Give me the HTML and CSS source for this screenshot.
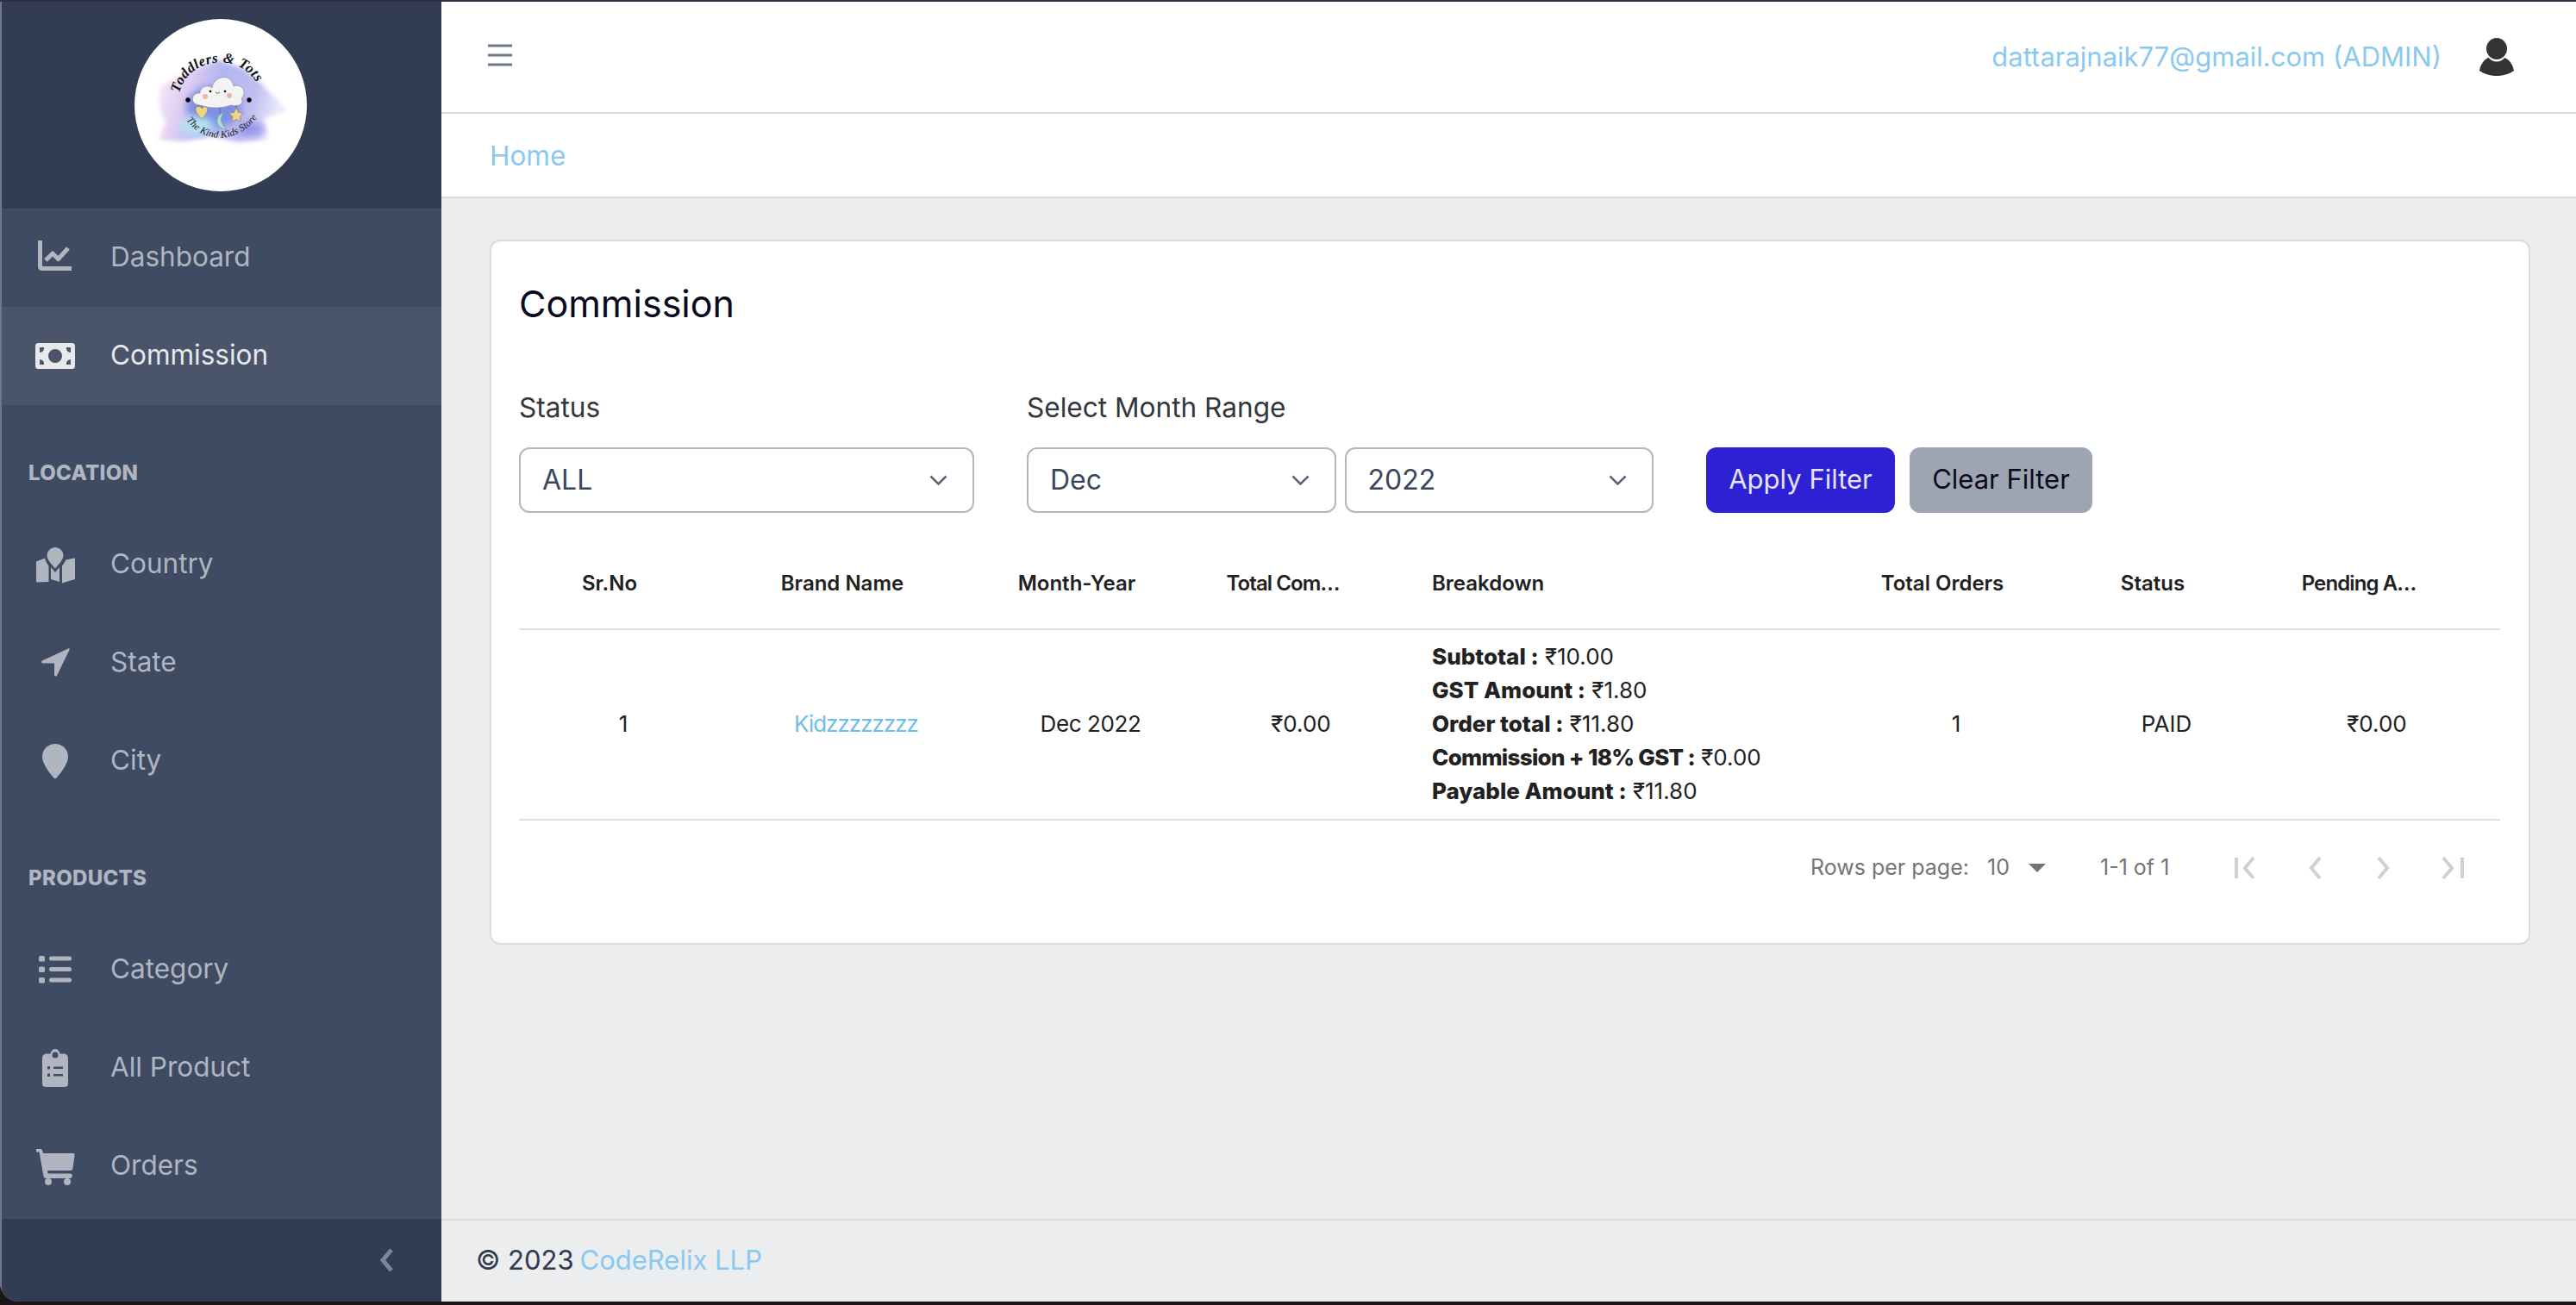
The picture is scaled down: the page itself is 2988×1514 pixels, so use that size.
FILE: index.html
```html
<!DOCTYPE html>
<html lang="en">
<head>
<meta charset="utf-8">
<title>Commission</title>
<link rel="stylesheet" href="styles.css">
</head>
<body>
<div class="app">
  <aside class="sidebar">
    <div class="brand">
      <svg class="logo" viewBox="0 0 200 200" aria-label="Toddlers &amp; Tots logo">
        <defs>
          <filter id="soft" x="-30%" y="-30%" width="160%" height="160%"><feGaussianBlur stdDeviation="4"/></filter>
          <filter id="softer" x="-20%" y="-20%" width="140%" height="140%"><feGaussianBlur stdDeviation="2.500"/></filter>
          <linearGradient id="wash" x1="0" y1="0" x2="1" y2="0.2">
            <stop offset="0" stop-color="#f8ebf8"/>
            <stop offset="0.28" stop-color="#dcc8f0"/>
            <stop offset="0.5" stop-color="#a9aef0"/>
            <stop offset="0.8" stop-color="#b9b6f0"/>
            <stop offset="1" stop-color="#e6e4f9"/>
          </linearGradient>
          <path id="arcTop" d="M52 86 C62 42 130 36 146 84 L160 120"/>
          <path id="arcBottom" d="M60 117 C80 145 118 145 141 116 L165 90"/>
        </defs>
        <circle cx="100" cy="100" r="100" fill="#fff"/>
        <path d="M30 78 L62 62 L96 47 L128 58 L148 76 L177 106 L150 116 L155 140 L120 143 L90 136 L56 142 L28 140 L36 120 L28 100Z" fill="url(#wash)" filter="url(#softer)" opacity=".9"/>
        <ellipse cx="92" cy="102" rx="32" ry="24" fill="#7f8fe4" filter="url(#soft)"/>
        <ellipse cx="72" cy="124" rx="20" ry="11" fill="#b5e0f2" filter="url(#soft)"/>
        <ellipse cx="135" cy="128" rx="16" ry="9" fill="#9a99ea" filter="url(#soft)"/>
        <path d="M76 100 C64 100 65 85 76 86 C76 78 86 76 90 80 C92 66 112 62 115 78 C125 74 131 86 124 92 C128 100 118 102 112 100 C100 104 88 104 76 100Z" fill="#f3f3f3" stroke="#8f8f96" stroke-width=".6"/>
        <circle cx="88" cy="84" r="1.300" fill="#111"/><circle cx="105" cy="84" r="1.300" fill="#111"/>
        <path d="M94 85 q2.500 2.500 5 0" fill="none" stroke="#222" stroke-width=".7"/>
        <circle cx="82" cy="90" r="3" fill="#eab7ae"/><circle cx="110" cy="89" r="3" fill="#eab7ae"/>
        <circle cx="62" cy="94" r="2.700" fill="#000"/><circle cx="133" cy="94" r="2.700" fill="#000"/>
        <path d="M78 101v2M99 103v8M118 100v4" stroke="#555" stroke-width=".6"/>
        <path d="M78 116 C68 106 70 101 75 101.500 C77 102 78 103 78 104 C79 102 81 101.500 83 102 C87 104 84 110 78 116Z" fill="#eed585" stroke="#6d6a5c" stroke-width=".5"/>
        <path d="M104 109 C94 109 91 127 107 128 C100 122 98 114 104 109Z" fill="#a8dfd2" stroke="#6b8f8b" stroke-width=".5"/>
        <path d="M118 103l2.500 5.500 6 .7-4.500 4 1.300 6-5.300-3-5.300 3 1.300-6-4.500-4 6-.7z" fill="#eed585" stroke="#77745f" stroke-width=".5"/>
        <text class="logo-title"><textPath href="#arcTop">Toddlers &amp; Tots</textPath></text>
        <text class="logo-sub"><textPath href="#arcBottom">The Kind Kids Store</textPath></text>
      </svg>
    </div>
    <nav class="nav">
      <a class="nav-item">
        <svg class="ico" viewBox="0 0 46 46"><path d="M5.500 3v30.500a2 2 0 0 0 2 2H42" class="line"/><path d="M12 26l8-8 6.500 6.500L38 12" class="line"/></svg>
        <span>Dashboard</span>
      </a>
      <a class="nav-item active">
        <svg class="ico" viewBox="0 0 46 46"><path fill-rule="evenodd" d="M3.500 8h39A3.500 3.500 0 0 1 46 11.500v23a3.500 3.500 0 0 1-3.500 3.500h-39A3.500 3.500 0 0 1 0 34.500v-23A3.500 3.500 0 0 1 3.500 8zM23 15a8 8 0 1 0 0 16 8 8 0 0 0 0-16zM5 13v6a5 5 0 0 0 5-6zM36 13a5 5 0 0 0 5 6v-6zM5 27v6h5a5 5 0 0 0-5-6zM41 27a5 5 0 0 0-5 6h5z"/></svg>
        <span>Commission</span>
      </a>
      <div class="nav-title first">Location</div>
      <a class="nav-item">
        <svg class="ico" viewBox="0 0 46 46"><path d="M23 3a9.500 9.500 0 0 0-9.500 9.500c0 4.500 6 11 9.500 15 3.500-4 9.500-10.500 9.500-15A9.500 9.500 0 0 0 23 3z"/><path d="M1 19.500l10-4c.5 3 3 7 4.500 9V43L2.500 43.500A1.500 1.500 0 0 1 1 42zM18 26l5 6 5-6v17l-10-3zM45 15.500a1 1 0 0 1 1 1V40l-15 4.500V24.500c2-2.500 3.500-5 4.500-7z"/></svg>
        <span>Country</span>
      </a>
      <a class="nav-item">
        <svg class="ico" viewBox="0 0 46 46"><path d="M38 6.500 8 20.500c-1.500.8-1 3 .7 3H22v13.500c0 1.700 2.300 2.200 3 .7L39.500 8c.5-1.200-.4-2-1.500-1.500z"/></svg>
        <span>State</span>
      </a>
      <a class="nav-item">
        <svg class="ico" viewBox="0 0 46 46"><path d="M23 3C14.500 3 8 9.500 8 18c0 8 9 19.500 13.500 24.500a2 2 0 0 0 3 0C29 37.500 38 26 38 18 38 9.500 31.500 3 23 3z"/></svg>
        <span>City</span>
      </a>
      <div class="nav-title">Products</div>
      <a class="nav-item">
        <svg class="ico" viewBox="0 0 46 46"><rect x="4" y="7" width="7" height="6.500" rx="1.500"/><rect x="4" y="19.500" width="7" height="6.500" rx="1.500"/><rect x="4" y="32" width="7" height="6.500" rx="1.500"/><rect x="16" y="7.500" width="26" height="5" rx="2.500"/><rect x="16" y="20" width="26" height="5" rx="2.500"/><rect x="16" y="32.500" width="26" height="5" rx="2.500"/></svg>
        <span>Category</span>
      </a>
      <a class="nav-item">
        <svg class="ico" viewBox="0 0 46 46"><path fill-rule="evenodd" d="M13 6.500h4.500C18 3.500 20 1 23 1s5 2.500 5.500 5.500H33a5 5 0 0 1 5 5V41a4 4 0 0 1-4 4H12a4 4 0 0 1-4-4V11.500a5 5 0 0 1 5-5zM23 4.500a2.500 2.500 0 0 0 0 7 2.500 2.500 0 0 0 0-7zM14 21v3.500h3V21zM21 21.500v2.500h11v-2.500zM14 29.500V33h3v-3.500zM21 30v2.500h11V30z"/></svg>
        <span>All Product</span>
      </a>
      <a class="nav-item">
        <svg class="ico" viewBox="0 0 46 46"><path d="M1 3h5a2 2 0 0 1 2 1.500L9 8h34.500c1.500 0 2.500 1 2 2.500l-2 15c-.2 1.500-1.300 2.500-3 2.500H14l.7 3.500H40a1.500 1.500 0 0 1 0 5.500H12a2.500 2.500 0 0 1-2.400-2L4.500 6.500H1z"/><circle cx="15" cy="41" r="4"/><circle cx="37" cy="41" r="4"/></svg>
        <span>Orders</span>
      </a>
    </nav>
    <div class="sidebar-foot">
      <svg class="collapse" viewBox="0 0 18 28"><path d="M14 2 4 14l10 12"/></svg>
    </div>
  </aside>
  <div class="main">
    <header class="topbar">
      <svg class="burger" viewBox="0 0 28 26"><path d="M0 2h28M0 13h28M0 24h28"/></svg>
      <div class="account">
        <a class="email">dattarajnaik77@gmail.com (ADMIN)</a>
        <svg class="user" viewBox="0 0 42 44"><ellipse cx="21" cy="12.500" rx="12" ry="12.500"/><path d="M11.500 23c3 3 6 4.500 9.500 4.500s6.500-1.500 9.500-4.500c5 2 9.500 8 10.500 15-5 3.500-12 6-20 6s-15-2.500-20-6c1-7 5.500-13 10-15z"/></svg>
      </div>
    </header>
    <div class="crumbs"><a>Home</a></div>
    <main class="content">
      <section class="card">
        <h1 class="title">Commission</h1>
        <div class="filters">
          <div class="field status-field">
            <div class="label">Status</div>
            <div class="select"><span>ALL</span><svg class="chev" viewBox="0 0 21 12"><path d="M1.500 1.500 10.500 10.500 19.500 1.500"/></svg></div>
          </div>
          <div class="field month-field">
            <div class="label">Select Month Range</div>
            <div class="pair">
              <div class="select"><span>Dec</span><svg class="chev" viewBox="0 0 21 12"><path d="M1.500 1.500 10.500 10.500 19.500 1.500"/></svg></div>
              <div class="select"><span>2022</span><svg class="chev" viewBox="0 0 21 12"><path d="M1.500 1.500 10.500 10.500 19.500 1.500"/></svg></div>
            </div>
          </div>
          <div class="actions">
            <button class="btn apply">Apply Filter</button>
            <button class="btn clear">Clear Filter</button>
          </div>
        </div>
        <div class="table">
          <div class="row head">
            <div class="cell">Sr.No</div>
            <div class="cell">Brand Name</div>
            <div class="cell">Month-Year</div>
            <div class="cell clip">Total Com…</div>
            <div class="cell left">Breakdown</div>
            <div class="cell">Total Orders</div>
            <div class="cell">Status</div>
            <div class="cell clip">Pending A…</div>
          </div>
          <div class="row body">
            <div class="cell">1</div>
            <div class="cell"><a class="link">Kidzzzzzzzz</a></div>
            <div class="cell month-cell">Dec 2022</div>
            <div class="cell">₹0.00</div>
            <div class="cell left breakdown">
              <div><b>Subtotal :</b> ₹10.00</div>
              <div><b>GST Amount :</b> ₹1.80</div>
              <div><b>Order total :</b> ₹11.80</div>
              <div class="tight"><b>Commission + 18% GST :</b> ₹0.00</div>
              <div><b>Payable Amount :</b> ₹11.80</div>
            </div>
            <div class="cell">1</div>
            <div class="cell">PAID</div>
            <div class="cell">₹0.00</div>
          </div>
        </div>
        <div class="pager">
          <span class="rows-label">Rows per page:</span>
          <span class="rows-value">10</span>
          <svg class="caret" viewBox="0 0 20 10"><path d="M0 0h20L10 10z"/></svg>
          <span class="range">1-1 of 1</span>
          <div class="pager-icons">
            <svg class="pg" viewBox="0 0 26 28"><path d="M2 2v24M22 2 12 14l10 12"/></svg>
            <svg class="pg" viewBox="0 0 26 28"><path d="M19 2 9 14l10 12"/></svg>
            <svg class="pg" viewBox="0 0 26 28"><path d="M7 2l10 12L7 26"/></svg>
            <svg class="pg" viewBox="0 0 26 28"><path d="M2 2l10 12L2 26M24 2v24"/></svg>
          </div>
        </div>
      </section>
    </main>
    <footer class="footer"><span>© 2023</span> <a>CodeRelix LLP</a></footer>
  </div>
</div>
</body>
</html>
```
FILE: styles.css
```css
* { box-sizing: border-box; }
html, body { margin: 0; height: 100%; }
body {
  width: 2988px;
  height: 1514px;
  overflow: hidden;
  background: #1d1418;
  font-family: Inter, "Noto Sans", sans-serif;
  color: #2f3a4f;
}
.app {
  display: flex;
  height: 1510px;
  border-top: 2px solid #2c3040;
  border-bottom-left-radius: 22px;
  overflow: hidden;
  background: #ebedef;
}
.sidebar {
  width: 512px;
  flex: none;
  display: flex;
  flex-direction: column;
  background: #3f4b63;
  border-left: 2px solid #70778a;
}
.brand {
  height: 240px;
  flex: none;
  display: flex;
  justify-content: center;
  padding-top: 20px;
  background: #323d54;
}
.logo { width: 200px; height: 200px; display: block; margin-left: -2px; }
.logo-title { font: italic 700 16.500px "Liberation Serif", serif; fill: #111; letter-spacing: .5px; }
.logo-sub { font: italic 400 11.500px "Liberation Serif", serif; fill: #222; letter-spacing: .2px; }
.nav { flex: 1; display: flex; flex-direction: column; }
.nav-item {
  height: 114px;
  display: flex;
  align-items: center;
  gap: 41px;
  padding-left: 39px;
  font-size: 31.500px;
  color: #b0b5c0;
}
.nav-item span { padding-bottom: 3px; }
.nav-item.active { background: #4a546b; color: #e6e8ec; }
.ico { width: 46px; height: 46px; flex: none; fill: currentColor; }
.ico .line { fill: none; stroke: currentColor; stroke-width: 5; stroke-linejoin: round; }
.nav-title {
  height: 40px;
  margin: 58px 0 30px;
  padding-left: 31px;
  display: flex;
  align-items: center;
  font-size: 24px;
  font-weight: 800;
  letter-spacing: .3px;
  text-transform: uppercase;
  color: #b0b5c0;
}
.sidebar-foot {
  height: 96px;
  flex: none;
  display: flex;
  align-items: center;
  justify-content: flex-end;
  padding-right: 54px;
  background: #323d54;
}
.collapse { width: 18px; height: 28px; fill: none; stroke: #7d8798; stroke-width: 5; }
.main { flex: 1; min-width: 0; display: flex; flex-direction: column; }
.topbar {
  height: 130px;
  flex: none;
  display: flex;
  align-items: center;
  justify-content: space-between;
  padding: 0 71px 0 54px;
  background: #fff;
  border-bottom: 2px solid #d8dbe0;
}
.burger { width: 28px; height: 26px; margin-bottom: 4px; fill: none; stroke: #6f7686; stroke-width: 3; }
.account { display: flex; align-items: center; gap: 43px; }
.email { font-size: 31px; padding-bottom: 2px; color: #8ac9ef; }
.user { width: 42px; height: 44px; fill: #333; }
.crumbs {
  height: 98px;
  flex: none;
  display: flex;
  align-items: center;
  padding-left: 56px;
  background: #fff;
  border-bottom: 2px solid #d8dbe0;
  font-size: 31.500px;
  color: #8ac9ef;
}
.content { flex: 1; padding: 48px 53px 0 56px; }
.card {
  height: 818px;
  padding: 33px 33px 33px 32px;
  background: #fff;
  border: 2px solid #d8dbe0;
  border-radius: 12px;
}
.title { margin: 0 0 58px; font-size: 43px; line-height: 78px; font-weight: 400; color: #0a0a1e; }
.filters { display: flex; align-items: flex-end; gap: 61px; }
.status-field { width: 528px; }
.month-field { width: 727px; }
.label { font-size: 31.600px; line-height: 48px; margin-bottom: 22px; color: #32363d; }
.pair { display: flex; gap: 10px; }
.pair .select { flex: 1; }
.select {
  height: 76px;
  display: flex;
  align-items: center;
  justify-content: space-between;
  padding: 0 29px 0 25px;
  border: 2px solid #b1b7c1;
  border-radius: 12px;
  font-size: 32px;
  color: #3a465b;
}
.select span { padding-bottom: 2px; }
.chev { width: 21px; height: 12px; fill: none; stroke: #5a6478; stroke-width: 2.500; }
.actions { display: flex; gap: 17px; }
.btn {
  height: 76px;
  padding: 0 0 3px;
  border: 0;
  border-radius: 12px;
  font: 400 31px Inter, sans-serif;
}
.apply { width: 219px; background: #2e20d3; color: #e6e4fb; }
.clear { width: 212px; background: #9da5b1; color: #0a0a1e; }
.table { margin-top: 32px; }
.row {
  display: grid;
  grid-template-columns: 242px 298px 246px 242px 517px 244px 244px 244px;
  border-bottom: 2px solid #e0e0e0;
  width: 100%;
}
.head { height: 104px; padding-bottom: 3px; font-size: 24px; font-weight: 600; color: #212121; align-items: center; }
.head .cell { padding-right: 32px; }
.head .cell.left { padding-right: 0; }
.head .cell.clip { padding-right: 42px; letter-spacing: -.9px; }
.body { height: 221px; padding-bottom: 3px; font-size: 26px; color: #212121; align-items: center; }
.cell { text-align: center; white-space: nowrap; }
.cell.left { text-align: left; padding-left: 31px; }
.month-cell { letter-spacing: -.4px; }
.link { color: #6fbdea; letter-spacing: -1px; }
.breakdown { line-height: 39px; }
.breakdown b { font-weight: 800; }
.breakdown .tight b { letter-spacing: -.7px; }
.pager {
  height: 110px;
  display: flex;
  align-items: center;
  padding-left: 1498px;
  font-size: 25px;
  color: #757575;
}
.rows-label { width: 205px; padding-bottom: 3px; }
.rows-value { width: 48px; padding-bottom: 3px; }
.caret { width: 20px; height: 10px; fill: #757575; }
.range { margin-left: 63px; width: 156px; padding-bottom: 3px; }
.pager-icons { display: flex; gap: 54px; }
.pg { width: 26px; height: 28px; fill: none; stroke: #d0d0d0; stroke-width: 4; }
.footer {
  height: 96px;
  flex: none;
  display: flex;
  align-items: center;
  gap: 7px;
  padding: 0 0 3px 40px;
  border-top: 2px solid #d8dbe0;
  font-size: 31px;
  color: #2f3a4f;
}
.footer a { color: #8ac9ef; }
```
